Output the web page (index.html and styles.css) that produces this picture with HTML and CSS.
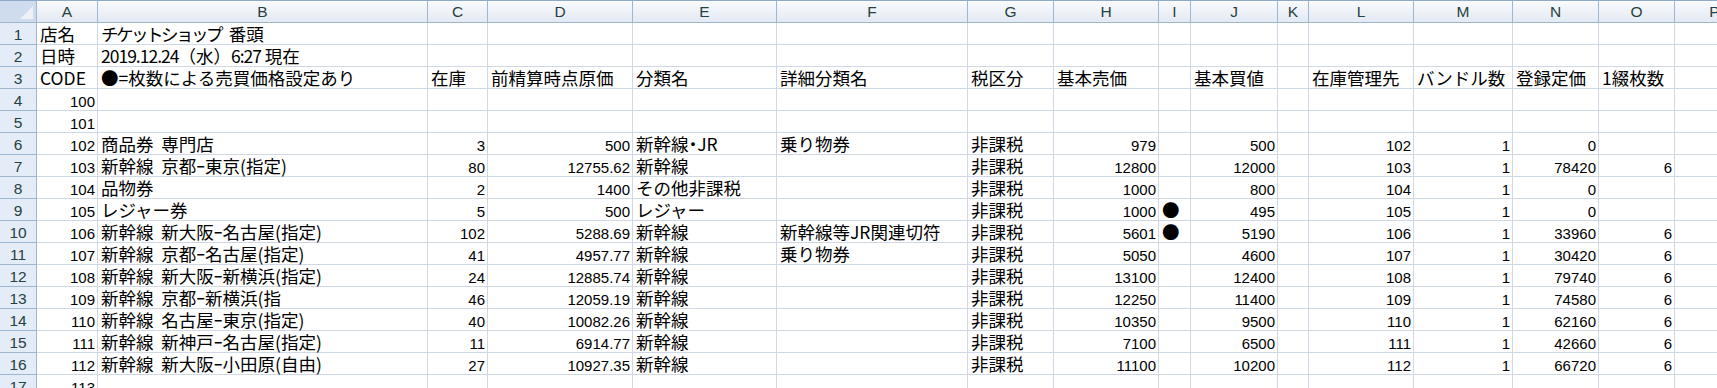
FILE: index.html
```html
<!DOCTYPE html>
<html lang="ja">
<head>
<meta charset="utf-8">
<title>Sheet</title>
<link rel="stylesheet" href="styles.css">
</head>
<body>
<div class="sheet">
  <div class="row hdr">
    <div class="corner"></div><div>A</div><div>B</div><div>C</div><div>D</div><div>E</div><div>F</div><div>G</div><div>H</div><div>I</div><div>J</div><div>K</div><div>L</div><div>M</div><div>N</div><div>O</div><div>P</div>
  </div>
  <div class="row"><div class="rh">1</div><div>店名</div><div><span class="k">チケットショップ</span>  番頭</div><div></div><div></div><div></div><div></div><div></div><div></div><div></div><div></div><div></div><div></div><div></div><div></div><div></div><div></div></div>
  <div class="row"><div class="rh">2</div><div>日時</div><div><span class="t">2019.12.24</span>（水）<span class="t">6:27</span> 現在</div><div></div><div></div><div></div><div></div><div></div><div></div><div></div><div></div><div></div><div></div><div></div><div></div><div></div><div></div></div>
  <div class="row"><div class="rh">3</div><div>CODE</div><div>●=枚数による売買価格設定あり</div><div>在庫</div><div>前精算時点原価</div><div>分類名</div><div>詳細分類名</div><div>税区分</div><div>基本売価</div><div></div><div>基本買値</div><div></div><div>在庫管理先</div><div>バンドル数</div><div>登録定価</div><div>1綴枚数</div><div></div></div>
  <div class="row"><div class="rh">4</div><div class="n">100</div><div></div><div></div><div></div><div></div><div></div><div></div><div></div><div></div><div></div><div></div><div></div><div></div><div></div><div></div><div></div></div>
  <div class="row"><div class="rh">5</div><div class="n">101</div><div></div><div></div><div></div><div></div><div></div><div></div><div></div><div></div><div></div><div></div><div></div><div></div><div></div><div></div><div></div></div>
  <div class="row"><div class="rh">6</div><div class="n">102</div><div>商品券  専門店</div><div class="n">3</div><div class="n">500</div><div>新幹線<span class="m">・</span>JR</div><div>乗り物券</div><div>非課税</div><div class="n">979</div><div></div><div class="n">500</div><div></div><div class="n">102</div><div class="n">1</div><div class="n">0</div><div></div><div></div></div>
  <div class="row"><div class="rh">7</div><div class="n">103</div><div>新幹線  京都ｰ東京(指定)</div><div class="n">80</div><div class="n">12755.62</div><div>新幹線</div><div></div><div>非課税</div><div class="n">12800</div><div></div><div class="n">12000</div><div></div><div class="n">103</div><div class="n">1</div><div class="n">78420</div><div class="n">6</div><div></div></div>
  <div class="row"><div class="rh">8</div><div class="n">104</div><div>品物券</div><div class="n">2</div><div class="n">1400</div><div>その他非課税</div><div></div><div>非課税</div><div class="n">1000</div><div></div><div class="n">800</div><div></div><div class="n">104</div><div class="n">1</div><div class="n">0</div><div></div><div></div></div>
  <div class="row"><div class="rh">9</div><div class="n">105</div><div>レジャー券</div><div class="n">5</div><div class="n">500</div><div>レジャー</div><div></div><div>非課税</div><div class="n">1000</div><div class="dot">●</div><div class="n">495</div><div></div><div class="n">105</div><div class="n">1</div><div class="n">0</div><div></div><div></div></div>
  <div class="row"><div class="rh">10</div><div class="n">106</div><div>新幹線  新大阪ｰ名古屋(指定)</div><div class="n">102</div><div class="n">5288.69</div><div>新幹線</div><div>新幹線等JR関連切符</div><div>非課税</div><div class="n">5601</div><div class="dot">●</div><div class="n">5190</div><div></div><div class="n">106</div><div class="n">1</div><div class="n">33960</div><div class="n">6</div><div></div></div>
  <div class="row"><div class="rh">11</div><div class="n">107</div><div>新幹線  京都ｰ名古屋(指定)</div><div class="n">41</div><div class="n">4957.77</div><div>新幹線</div><div>乗り物券</div><div>非課税</div><div class="n">5050</div><div></div><div class="n">4600</div><div></div><div class="n">107</div><div class="n">1</div><div class="n">30420</div><div class="n">6</div><div></div></div>
  <div class="row"><div class="rh">12</div><div class="n">108</div><div>新幹線  新大阪ｰ新横浜(指定)</div><div class="n">24</div><div class="n">12885.74</div><div>新幹線</div><div></div><div>非課税</div><div class="n">13100</div><div></div><div class="n">12400</div><div></div><div class="n">108</div><div class="n">1</div><div class="n">79740</div><div class="n">6</div><div></div></div>
  <div class="row"><div class="rh">13</div><div class="n">109</div><div>新幹線  京都ｰ新横浜(指</div><div class="n">46</div><div class="n">12059.19</div><div>新幹線</div><div></div><div>非課税</div><div class="n">12250</div><div></div><div class="n">11400</div><div></div><div class="n">109</div><div class="n">1</div><div class="n">74580</div><div class="n">6</div><div></div></div>
  <div class="row"><div class="rh">14</div><div class="n">110</div><div>新幹線  名古屋ｰ東京(指定)</div><div class="n">40</div><div class="n">10082.26</div><div>新幹線</div><div></div><div>非課税</div><div class="n">10350</div><div></div><div class="n">9500</div><div></div><div class="n">110</div><div class="n">1</div><div class="n">62160</div><div class="n">6</div><div></div></div>
  <div class="row"><div class="rh">15</div><div class="n">111</div><div>新幹線  新神戸ｰ名古屋(指定)</div><div class="n">11</div><div class="n">6914.77</div><div>新幹線</div><div></div><div>非課税</div><div class="n">7100</div><div></div><div class="n">6500</div><div></div><div class="n">111</div><div class="n">1</div><div class="n">42660</div><div class="n">6</div><div></div></div>
  <div class="row"><div class="rh">16</div><div class="n">112</div><div>新幹線  新大阪ｰ小田原(自由)</div><div class="n">27</div><div class="n">10927.35</div><div>新幹線</div><div></div><div>非課税</div><div class="n">11100</div><div></div><div class="n">10200</div><div></div><div class="n">112</div><div class="n">1</div><div class="n">66720</div><div class="n">6</div><div></div></div>
  <div class="row"><div class="rh">17</div><div class="n">113</div><div></div><div></div><div></div><div></div><div></div><div></div><div></div><div></div><div></div><div></div><div></div><div></div><div></div><div></div><div></div></div>
</div>
</body>
</html>
```
FILE: styles.css
```css
html, body {
  margin: 0;
  padding: 0;
  background: #ffffff;
  overflow: hidden;
}

.sheet {
  width: 1717px;
  height: 388px;
  overflow: hidden;
  font-family: "Noto Sans CJK JP", sans-serif;
  font-size: 17.5px;
  color: #000;
}

.row {
  display: grid;
  grid-template-columns: 37px 61px 330px 60px 145px 144px 191px 86px 105px 32px 87px 31px 105px 99px 86px 76px 80px;
  height: 22px;
}

.row > div {
  box-sizing: border-box;
  height: 22px;
  border-right: 1px solid #d0d7e5;
  border-bottom: 1px solid #d0d7e5;
  padding: 0 3px;
  line-height: 21px;
  white-space: pre;
}

.row > .n {
  text-align: right;
  font-family: "Liberation Sans", Arial, sans-serif;
  font-size: 15px;
  line-height: 16px;
  padding: 5px 2px 0 3px;
}

.k {
  letter-spacing: -2.5px;
}

.t {
  letter-spacing: -1px;
}

.m {
  font-feature-settings: "palt";
}

.row > .dot {
  padding-left: 3px;
}

.row > .rh {
  background: #e4ecf7;
  border-right: 1px solid #9eb6ce;
  border-bottom: 1px solid #9eb6ce;
  text-align: center;
  line-height: 17px;
  padding: 3px 0 0 0;
  font-family: "Liberation Sans", Arial, sans-serif;
  font-size: 15.5px;
  color: #27413e;
}

.hdr {
  height: 23px;
}

.hdr > div {
  height: 23px;
  border-top: 1px solid #8fa9c8;
  border-right: 1px solid #9eb6ce;
  border-bottom: 1px solid #9eb6ce;
  background: linear-gradient(#f9fbfd, #e2e9f3);
  text-align: center;
  line-height: 18px;
  padding: 2px 0 0 0;
  font-family: "Liberation Sans", Arial, sans-serif;
  font-size: 15.5px;
  color: #27413e;
  overflow: hidden;
}

.hdr > .corner {
  position: relative;
  background: #cfdcee;
}

.hdr > .corner::after {
  content: "";
  position: absolute;
  right: 3px;
  bottom: 3px;
  width: 0;
  height: 0;
  border-left: 13px solid transparent;
  border-bottom: 13px solid #eef2f8;
}
```
